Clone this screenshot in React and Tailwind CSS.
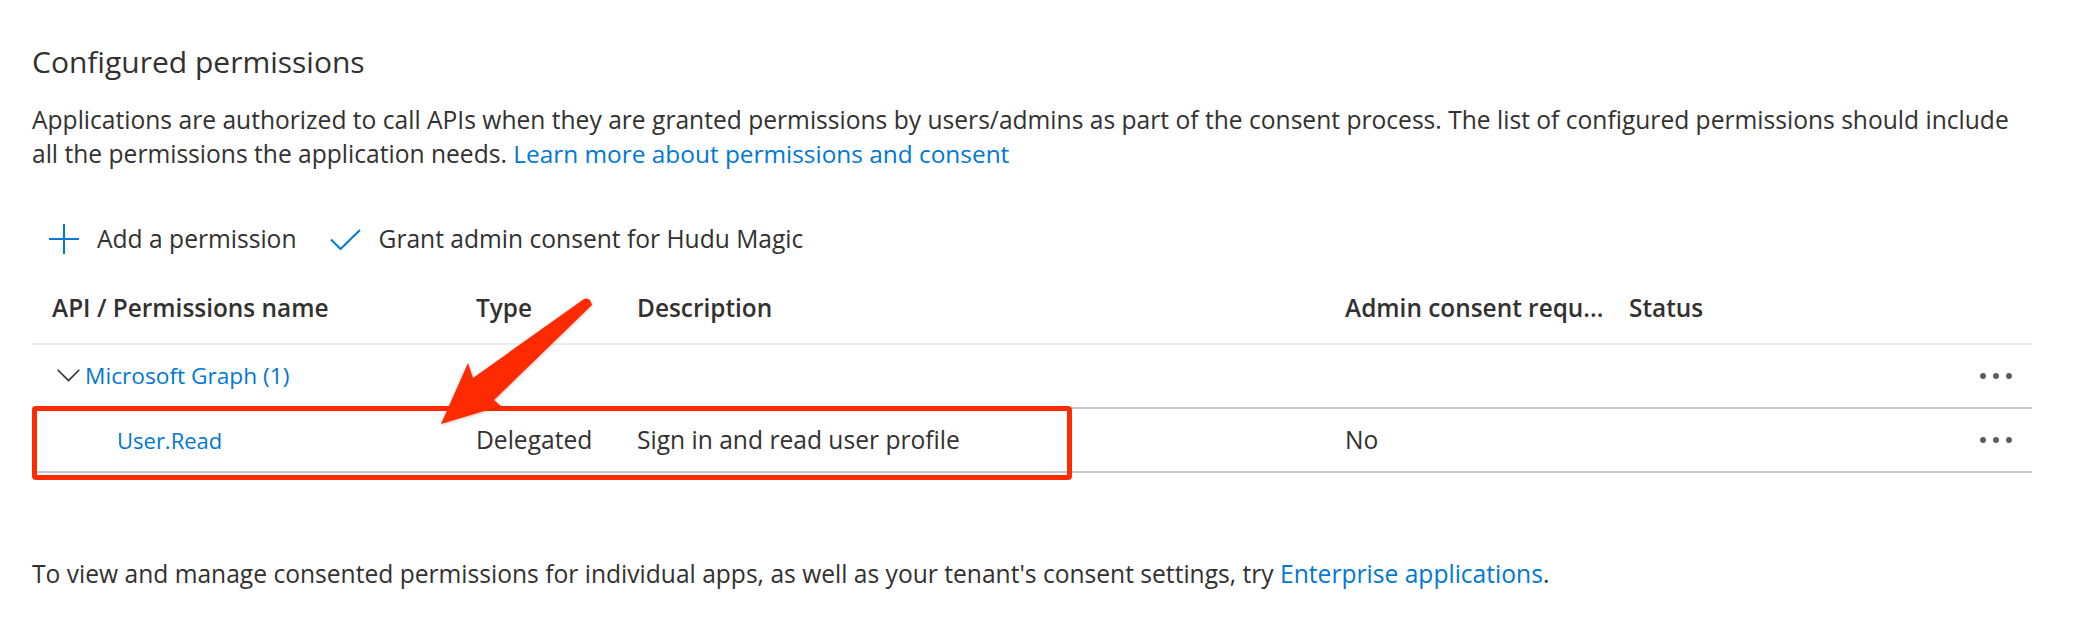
import React from 'react'

const cols = 'grid grid-cols-[424px_161px_708px_284px_1fr_72px] items-center'

function Dots() {
  return (
    <div className="flex justify-end items-center gap-[7px] pr-[20px]">
      <span className="w-[6px] h-[6px] rounded-full bg-[#605e5c]" />
      <span className="w-[6px] h-[6px] rounded-full bg-[#605e5c]" />
      <span className="w-[6px] h-[6px] rounded-full bg-[#605e5c]" />
    </div>
  )
}

export default function App() {
  return (
    <div className="relative w-[2084px] h-[634px] overflow-hidden bg-white pl-[32px] pr-[52px] pt-[42px] text-[#323130] font-['Open_Sans','Noto_Sans',sans-serif]">
      {/* Heading */}
      <h2 className="text-[30px] leading-[40px] font-normal">Configured permissions</h2>
      <p className="mt-[21px] text-[24.6px] leading-[34px]">
        Applications are authorized to call APIs when they are granted permissions by users/admins as part of the consent process. The list of configured permissions should include all the permissions the application needs.{' '}
        <a className="text-[#0078d4] text-[24.4px]">Learn more about permissions and consent</a>
      </p>

      {/* Command bar */}
      <div className="mt-[44px] h-[48px] flex items-center pl-[17px] text-[24.6px]">
        <svg width="30" height="30" viewBox="0 0 30 30" className="shrink-0">
          <path d="M15 0V30M0 15H30" stroke="#0078d4" strokeWidth="2" fill="none" />
        </svg>
        <span className="ml-[18px]">Add a permission</span>
        <svg width="31" height="21" viewBox="0 0 31 21" className="ml-[33px] shrink-0">
          <path d="M1 10.5L10.5 20L30 1" stroke="#0078d4" strokeWidth="2" fill="none" />
        </svg>
        <span className="ml-[18px]">Grant admin consent for Hudu Magic</span>
      </div>

      {/* Table */}
      <div className="mt-[10px] text-[24.6px]">
        <div className={`${cols} h-[72px] border-b-2 border-[#edebe9] font-semibold text-[24.4px]`}>
          <div className="pl-[20px]">API / Permissions name</div>
          <div className="pl-[20px]">Type</div>
          <div className="pl-[20px]">Description</div>
          <div className="pl-[20px] whitespace-nowrap overflow-hidden">Admin consent requ...</div>
          <div className="pl-[20px]">Status</div>
          <div />
        </div>
        <div className={`${cols} h-[64px] border-b-2 border-[#c8c6c4]`}>
          <div className="pl-[25px] flex items-center gap-[5px] text-[#0078d4] text-[22.7px]">
            <svg width="23" height="13" viewBox="0 0 23 13" className="shrink-0">
              <path d="M0.7 0.7L11.5 11.5L22.3 0.7" stroke="#323130" strokeWidth="1.6" fill="none" />
            </svg>
            <span>Microsoft Graph (1)</span>
          </div>
          <div />
          <div />
          <div />
          <div />
          <Dots />
        </div>
        <div className={`${cols} h-[64px] border-b-2 border-[#c8c6c4]`}>
          <div className="pl-[85px] text-[#0078d4] text-[22px]">User.Read</div>
          <div className="pl-[20px]">Delegated</div>
          <div className="pl-[20px]">Sign in and read user profile</div>
          <div className="pl-[20px]">No</div>
          <div />
          <Dots />
        </div>
      </div>

      <p className="mt-[84px] text-[24.6px] leading-[34px]">
        To view and manage consented permissions for individual apps, as well as your tenant's consent settings, try{' '}
        <a className="text-[#0078d4]">Enterprise applications</a>.
      </p>

      {/* Annotation: highlight box */}
      <div className="absolute left-[32px] top-[406px] w-[1040px] h-[74px] border-[5px] border-[#ff2a00] rounded-[4px]" />

      {/* Annotation: arrow */}
      <svg className="absolute left-0 top-0 pointer-events-none" width="2084" height="634" viewBox="0 0 2084 634">
        <defs>
          <filter id="sh" x="-20%" y="-20%" width="140%" height="140%">
            <feDropShadow dx="0" dy="1" stdDeviation="1.5" floodColor="#000" floodOpacity="0.25" />
          </filter>
        </defs>
        <path
          d="M584 299 Q590 297 592 305 L494 400 L501 406 L441 424 L468 363 L473 378 Z"
          fill="#ff2a00"
          filter="url(#sh)"
        />
      </svg>
    </div>
  )
}
